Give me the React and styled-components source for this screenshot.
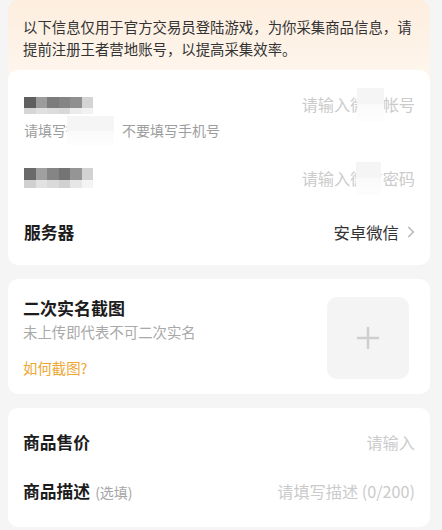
import React from "react";
import styled, { createGlobalStyle } from "styled-components";

const GlobalStyle = createGlobalStyle`
  body {
    margin: 0;
    background: #f5f5f5;
    font-family: "Noto Sans CJK SC", "Noto Sans", sans-serif;
  }
`;

const Page = styled.div`
  display: flex;
  flex-direction: column;
  padding: 0 12px 4px 8px;
  width: 422px;
`;

const Notice = styled.div`
  background: linear-gradient(180deg, #fdeedf 0%, #fef6ee 100%);
  border-radius: 10px 10px 0 0;
  padding: 16px 15px 23px 15px;
  font-size: 14.4px;
  line-height: 21.5px;
  color: #333;
`;

const Card = styled.div`
  background: #fff;
  border-radius: 10px;
  padding: ${(p) => p.$pad};
  margin-top: ${(p) => p.$top || "14px"};
  display: flex;
  flex-direction: ${(p) => (p.$row ? "row" : "column")};
  align-items: ${(p) => (p.$row ? "center" : "stretch")};
  justify-content: space-between;
`;

const Row = styled.div`
  display: flex;
  align-items: center;
  justify-content: space-between;
  height: 20px;
  margin-top: ${(p) => p.$top || "0"};
`;

const Label = styled.div`
  font-size: 16.8px;
  font-weight: 700;
  color: #1c1c1c;
  line-height: 20px;
  display: flex;
  align-items: baseline;
`;

const Optional = styled.span`
  font-size: 14px;
  font-weight: 400;
  color: #a6a6a6;
  margin-left: 5px;
`;

const Placeholder = styled.div`
  font-size: 16.2px;
  color: #cbcbcb;
  line-height: 20px;
`;

const Value = styled.div`
  font-size: 16.4px;
  color: #333;
  display: flex;
  align-items: center;
  gap: 8px;
`;

const Hint = styled.div`
  font-size: 14px;
  line-height: 20px;
  color: #9d9d9d;
  margin-top: ${(p) => p.$top || "6px"};
`;

// blurred-out part of a text, drawn over the hidden word
const Hidden = styled.span`
  position: relative;
  &::after {
    content: "";
    position: absolute;
    left: ${(p) => p.$left || "4px"};
    right: ${(p) => p.$right || "-2px"};
    top: -4px;
    bottom: -5px;
    background: linear-gradient(180deg, #f5f5f5 0%, #f5f5f5 50%, #fafafa 50%, #fdfdfd 100%);
  }
`;

const MosaicGrid = styled.div`
  display: grid;
  grid-template-columns: repeat(6, 11.5px);
  grid-template-rows: ${(p) => p.$rows};
  margin-top: ${(p) => p.$shift || "0"};
`;

const Cell = styled.div`
  background: ${(p) => p.$c};
`;

function Mosaic({ colors, rows, shift }) {
  return (
    <MosaicGrid $rows={rows} $shift={shift}>
      {colors.map((c, i) => (
        <Cell key={i} $c={c} />
      ))}
    </MosaicGrid>
  );
}

const Title = styled(Label)`
  font-size: 17px;
`;

const Sub = styled.div`
  font-size: 14.4px;
  line-height: 20px;
  color: #a9a9a9;
  margin-top: 4px;
`;

const Link = styled.div`
  font-size: 14.4px;
  line-height: 20px;
  color: #eea733;
  margin-top: 16px;
`;

const Upload = styled.div`
  width: 82px;
  height: 82px;
  border-radius: 10px;
  background: #f4f4f4;
  display: flex;
  align-items: center;
  justify-content: center;
  margin-right: 6px;
`;

const accountColors = [
  "#5f5f5f", "#9c9c9c", "#7c7c7c", "#848484", "#8f8f8f", "#d4d4d4",
  "#d6d6d6", "#e0e0e0", "#dcdcdc", "#d8d8d8", "#ececec", "#f2f2f2",
];
const passColors = [
  "#6a6a6a", "#a0a0a0", "#858585", "#747474", "#959595", "#d2d2d2",
  "#d0d0d0", "#e2e2e2", "#dadada", "#d0d0d0", "#e6e6e6", "#f4f4f4",
];

function Chevron() {
  return (
    <svg width="8" height="12" viewBox="0 0 8 12">
      <path d="M1.2 1 L6.4 6 L1.2 11" fill="none" stroke="#b8b8b8" strokeWidth="1.5" />
    </svg>
  );
}

function Plus() {
  return (
    <svg width="24" height="24" viewBox="0 0 24 24">
      <path d="M12 1 V23 M1 12 H23" stroke="#cfcfcf" strokeWidth="2.6" />
    </svg>
  );
}

export default function App() {
  return (
    <Page>
      <GlobalStyle />
      <Notice>
        以下信息仅用于官方交易员登陆游戏，为你采集商品信息，请提前注册王者营地账号，以提高采集效率。
      </Notice>

      <Card $top="-12px" $pad="24px 15px 23px 16px">
        <Row>
          <Mosaic colors={accountColors} rows="11px 6px" shift="2px" />
          <Placeholder>
            请输入<Hidden $left="7px" $right="-1px">微信</Hidden>帐号
          </Placeholder>
        </Row>
        <Hint>
          请填写<Hidden $left="1px" $right="-6px">微信号</Hidden>，不要填写手机号
        </Hint>
        <Row $top="28px">
          <Mosaic colors={passColors} rows="12px 8px" />
          <Placeholder>
            请输入<Hidden $left="6px" $right="2px">微信</Hidden>密码
          </Placeholder>
        </Row>
        <Row $top="34px">
          <Label>服务器</Label>
          <Value>
            安卓微信
            <Chevron />
          </Value>
        </Row>
      </Card>

      <Card $row $pad="18px 15px 15px 15px">
        <div>
          <Title>二次实名截图</Title>
          <Sub>未上传即代表不可二次实名</Sub>
          <Link>如何截图?</Link>
        </div>
        <Upload>
          <Plus />
        </Upload>
      </Card>

      <Card $pad="24px 15px 26px 15px">
        <Row>
          <Label>商品售价</Label>
          <Placeholder>请输入</Placeholder>
        </Row>
        <Row $top="29px">
          <Label>
            商品描述<Optional>(选填)</Optional>
          </Label>
          <Placeholder>请填写描述 (0/200)</Placeholder>
        </Row>
      </Card>
    </Page>
  );
}
